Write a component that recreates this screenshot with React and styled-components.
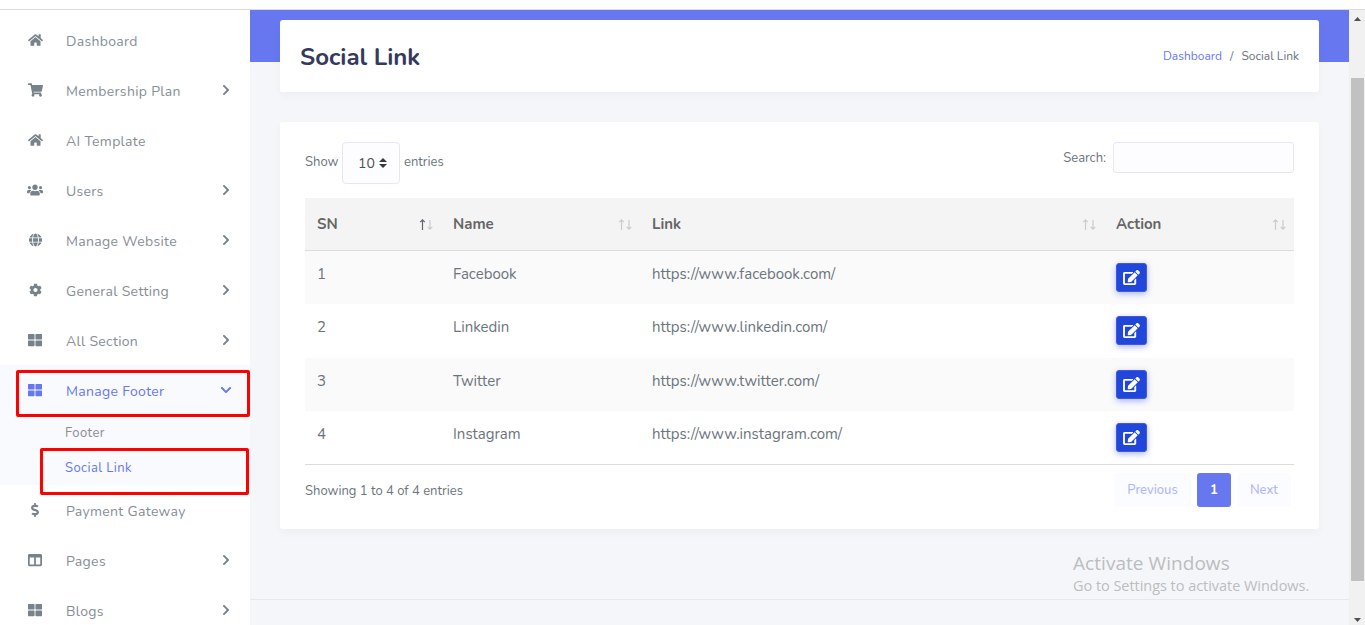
import React from 'react';
import styled, { createGlobalStyle, css } from 'styled-components';
import {
  FaHome, FaShoppingCart, FaUsers, FaGlobe, FaCog, FaThLarge,
  FaDollarSign, FaColumns, FaEdit, FaChevronRight, FaChevronDown,
} from 'react-icons/fa';

const Global = createGlobalStyle`
  *, *::before, *::after { box-sizing: border-box; }
  body {
    margin: 0;
    overflow: hidden;
    background: #fff;
    color: #6c757d;
    font: 400 13px/1.5 Nunito, Lato, "Open Sans", sans-serif;
  }
`;

const Page = styled.div`
  height: 625px;
  display: flex;
  flex-direction: column;
  overflow: hidden;
  position: relative;
`;
const TopEdge = styled.div`
  flex: 0 0 10px;
  border-bottom: 1px solid #dadce0;
`;
const Body = styled.div`
  flex: 1;
  min-height: 0;
  display: flex;
`;

/* Sidebar */
const Sidebar = styled.nav`
  flex: 0 0 250px;
  padding-top: 5px;
  background: #fff;
  overflow: hidden;
`;
const NavGroup = styled.div`
  background: ${p => (p.$active ? '#f9fafd' : 'transparent')};
`;
const NavItem = styled.a`
  display: flex;
  align-items: center;
  height: 50px;
  padding: 0 20px;
  color: ${p => (p.$active ? '#6777ef' : '#868e96')};
  font-size: 14px;
  letter-spacing: 0.32px;
`;
const NavIcon = styled.span`
  flex: 0 0 30px;
  display: flex;
  justify-content: center;
  color: ${p => (p.$active ? '#6777ef' : '#78828a')};
  svg { flex: none; height: 14px; width: ${p => p.$w}px; }
`;
const NavLabel = styled.span`
  flex: 1;
  padding: 3px 0 0 16px;
  white-space: nowrap;
`;
const Arrow = styled.span`
  display: flex;
  justify-content: center;
  width: 14px;
  margin: 0 -3px 1px 0;
  color: ${p => (p.$active ? '#6777ef' : '#78828a')};
  svg { flex: none; height: 12px; width: 12px; }
`;
const SubItem = styled.a`
  display: flex;
  align-items: center;
  height: 35px;
  padding: 3px 0 0 65px;
  font-size: 13px;
  color: ${p => (p.$active ? '#6777ef' : '#868e96')};
  letter-spacing: 0.42px;
`;

/* Main column */
const Main = styled.main`
  flex: 1;
  min-width: 0;
  display: flex;
  flex-direction: column;
  padding-top: 10px;
  background: linear-gradient(#6777ef 52px, #f4f6f9 52px);
`;
const cardBox = css`
  margin: 0 30px;
  background: #fff;
  border-radius: 3px;
  box-shadow: 0 4px 8px rgba(0, 0, 0, 0.03);
`;
const HeaderCard = styled.header`
  ${cardBox}
  height: 72px;
  display: flex;
  align-items: center;
  justify-content: space-between;
  padding: 0 20px;
`;
const Title = styled.h1`
  margin: 0;
  padding-top: 2px;
  font-size: 24px;
  line-height: 28px;
  font-weight: 700;
  color: #34395e;
`;
const Breadcrumb = styled.div`
  display: flex;
  gap: 8px;
  font-size: 12px;
`;
const Crumb = styled.a`
  color: #6777ef;
`;
const Card = styled.section`
  ${cardBox}
  margin-top: 30px;
  height: 407px;
  padding: 20px 25px 0;
`;
const Controls = styled.div`
  display: flex;
  justify-content: space-between;
  align-items: flex-start;
  height: 56px;
`;
const LengthControl = styled.label`
  display: flex;
  align-items: center;
  height: 42px;
  white-space: nowrap;
`;
const LengthLabel = styled.span`
  width: 37px;
`;
const Select = styled.span`
  display: flex;
  align-items: center;
  justify-content: space-between;
  width: 58px;
  height: 42px;
  margin-right: 4px;
  padding: 0 12px 0 15px;
  border: 1px solid #e4e6fc;
  border-radius: 4px;
  background: #fdfdff;
  color: #495057;
  font-size: 14px;
  svg { width: 8px; height: 10px; }
`;
const SearchControl = styled.label`
  display: flex;
  align-items: center;
  gap: 7px;
`;
const SearchText = styled.span`
  padding-top: 2px;
`;
const SearchInput = styled.input`
  width: 181px;
  height: 31px;
  border: 1px solid #e4e6fc;
  border-radius: 3px;
  background: #fdfdff;
`;

/* Table */
const Table = styled.table`
  width: 989px;
  table-layout: fixed;
  border-collapse: separate;
  border-spacing: 0;
  border-bottom: 1px solid #dadcde;
  font-size: 15px;
  line-height: 22px;
`;
const Th = styled.th`
  width: ${p => p.$w}px;
  height: 53px;
  padding: 0 8px 0 12px;
  background: #f4f4f4;
  border-bottom: 1px solid #dcdddf;
  color: #666;
  text-align: left;
  font-weight: 700;
`;
const ThInner = styled.div`
  display: flex;
  align-items: center;
  justify-content: space-between;
`;
const Row = styled.tr`
  height: ${p => p.$h}px;
  background: ${p => (p.$odd ? '#fafafa' : '#fff')};
`;
const Td = styled.td`
  padding: 12px 12px 0;
  vertical-align: top;
`;
const EditButton = styled.button`
  display: flex;
  align-items: center;
  justify-content: center;
  width: 31px;
  height: 29px;
  padding: 0 0 1px;
  border: 1px solid #4059e0;
  border-radius: 3px;
  background: #2046da;
  color: #fff;
  box-shadow: 0 2px 6px #acb5f6;
  svg { flex: none; height: 15px; width: 17px; }
`;

/* Table footer */
const TableFooter = styled.div`
  display: flex;
  justify-content: space-between;
  align-items: flex-start;
  padding: 8px 3px 0 0;
`;
const Info = styled.span`
  padding-top: 9px;
`;
const Pagination = styled.div`
  display: flex;
  gap: 6px;
`;
const PageLink = styled.a`
  display: flex;
  align-items: center;
  justify-content: center;
  width: ${p => p.$w}px;
  height: 34px;
  padding-top: 2px;
  border-radius: 3px;
  background: ${p => (p.$active ? '#6777ef' : '#fbfcff')};
  color: ${p => (p.$active ? '#fff' : '#b0b8f7')};
  font-weight: ${p => (p.$active ? 700 : 500)};
`;
const Footer = styled.footer`
  flex: 1;
  margin-top: 70px;
  border-top: 1px solid #e3eaef;
`;

/* Window scrollbar */
const Scrollbar = styled.div`
  flex: 0 0 16px;
  display: flex;
  flex-direction: column;
  align-items: center;
  justify-content: space-between;
  padding: 7px 0 3px;
  background: #f1f1f1;
  svg { display: block; width: 7px; height: 4px; fill: #505050; }
`;
const Thumb = styled.div`
  width: 13px;
  height: 503px;
  margin: 57px 0 0 1px;
  background: #c1c1c1;
`;
const Spacer = styled.div`
  flex: 1;
`;

/* Overlays */
const Highlight = styled.div`
  position: absolute;
  left: ${p => p.$x}px;
  top: ${p => p.$y}px;
  width: ${p => p.$w}px;
  height: 47px;
  border: 3px solid #fe0000;
  border-radius: 2px;
`;
const Watermark = styled.div`
  position: absolute;
  left: 1073px;
  top: 550px;
  color: #bcbdbf;
  font-family: "Segoe UI", "Open Sans", sans-serif;
  font-size: 14.5px;
  line-height: 20px;
  letter-spacing: -0.04px;
  white-space: nowrap;
`;
const WatermarkTitle = styled.div`
  font-size: 19px;
  line-height: 26px;
  letter-spacing: 0.05px;
`;

const NAV = [
  { label: 'Dashboard', icon: FaHome, w: 15 },
  { label: 'Membership Plan', icon: FaShoppingCart, w: 15, more: true },
  { label: 'AI Template', icon: FaHome, w: 15 },
  { label: 'Users', icon: FaUsers, w: 16, more: true },
  { label: 'Manage Website', icon: FaGlobe, w: 13, more: true },
  { label: 'General Setting', icon: FaCog, w: 13, more: true },
  { label: 'All Section', icon: FaThLarge, w: 14, more: true },
  {
    label: 'Manage Footer', icon: FaThLarge, w: 14, active: true,
    children: [{ label: 'Footer' }, { label: 'Social Link', active: true }],
  },
  { label: 'Payment Gateway', icon: FaDollarSign, w: 8 },
  { label: 'Pages', icon: FaColumns, w: 14, more: true },
  { label: 'Blogs', icon: FaThLarge, w: 14, more: true },
];

const COLUMNS = [
  { label: 'SN', w: 136, sorted: true },
  { label: 'Name', w: 199 },
  { label: 'Link', w: 464 },
  { label: 'Action', w: 190 },
];

const ROWS = [
  { name: 'Facebook', url: 'https://www.facebook.com/', h: 53 },
  { name: 'Linkedin', url: 'https://www.linkedin.com/', h: 54 },
  { name: 'Twitter', url: 'https://www.twitter.com/', h: 53 },
  { name: 'Instagram', url: 'https://www.instagram.com/', h: 53 },
];

function SortIcon({ sorted }) {
  return (
    <svg width="14" height="12" viewBox="0 0 14 12" fill="none">
      <path d="M3.5 12V2M1.2 4.2l2.3-2.4 2.3 2.4" stroke={sorted ? '#6a6070' : '#cbcbcb'} strokeWidth="1.2" />
      <path d="M11 2v9M8.7 8.8l2.3 2.4 2.3-2.4" stroke="#cbcbcb" strokeWidth="1.2" />
    </svg>
  );
}

export default function App() {
  return (
    <Page>
      <Global />
      <TopEdge />
      <Body>
        <Sidebar>
          {NAV.map(({ label, icon: Icon, w, more, active, children }) => (
            <NavGroup key={label} $active={active}>
              <NavItem $active={active}>
                <NavIcon $active={active} $w={w}><Icon /></NavIcon>
                <NavLabel>{label}</NavLabel>
                {more && <Arrow><FaChevronRight /></Arrow>}
                {active && <Arrow $active><FaChevronDown /></Arrow>}
              </NavItem>
              {children && children.map(c => (
                <SubItem key={c.label} $active={c.active}>{c.label}</SubItem>
              ))}
            </NavGroup>
          ))}
        </Sidebar>
        <Main>
          <HeaderCard>
            <Title>Social Link</Title>
            <Breadcrumb>
              <Crumb>Dashboard</Crumb>
              <span>/</span>
              <span>Social Link</span>
            </Breadcrumb>
          </HeaderCard>
          <Card>
            <Controls>
              <LengthControl>
                <LengthLabel>Show</LengthLabel>
                <Select>
                  10
                  <svg viewBox="0 0 8 10" fill="#343a40"><path d="M0 4 4 0l4 4zM0 6l4 4 4-4z" /></svg>
                </Select>
                <LengthLabel>entries</LengthLabel>
              </LengthControl>
              <SearchControl>
                <SearchText>Search:</SearchText>
                <SearchInput />
              </SearchControl>
            </Controls>
            <Table>
              <thead>
                <tr>
                  {COLUMNS.map(c => (
                    <Th key={c.label} $w={c.w}>
                      <ThInner>{c.label}<SortIcon sorted={c.sorted} /></ThInner>
                    </Th>
                  ))}
                </tr>
              </thead>
              <tbody>
                {ROWS.map((r, i) => (
                  <Row key={r.name} $h={r.h} $odd={i % 2 === 0}>
                    <Td>{i + 1}</Td>
                    <Td>{r.name}</Td>
                    <Td>{r.url}</Td>
                    <Td><EditButton><FaEdit /></EditButton></Td>
                  </Row>
                ))}
              </tbody>
            </Table>
            <TableFooter>
              <Info>Showing 1 to 4 of 4 entries</Info>
              <Pagination>
                <PageLink $w={77}>Previous</PageLink>
                <PageLink $w={34} $active>1</PageLink>
                <PageLink $w={54}>Next</PageLink>
              </Pagination>
            </TableFooter>
          </Card>
          <Footer />
        </Main>
        <Scrollbar>
          <svg viewBox="0 0 7 4"><path d="M0 4 3.5 0 7 4z" /></svg>
          <Thumb />
          <Spacer />
          <svg viewBox="0 0 7 4"><path d="M0 0h7L3.5 4z" /></svg>
        </Scrollbar>
      </Body>
      <Highlight $x={16} $y={370} $w={234} />
      <Highlight $x={40} $y={448} $w={209} />
      <Watermark>
        <WatermarkTitle>Activate Windows</WatermarkTitle>
        Go to Settings to activate Windows.
      </Watermark>
    </Page>
  );
}
